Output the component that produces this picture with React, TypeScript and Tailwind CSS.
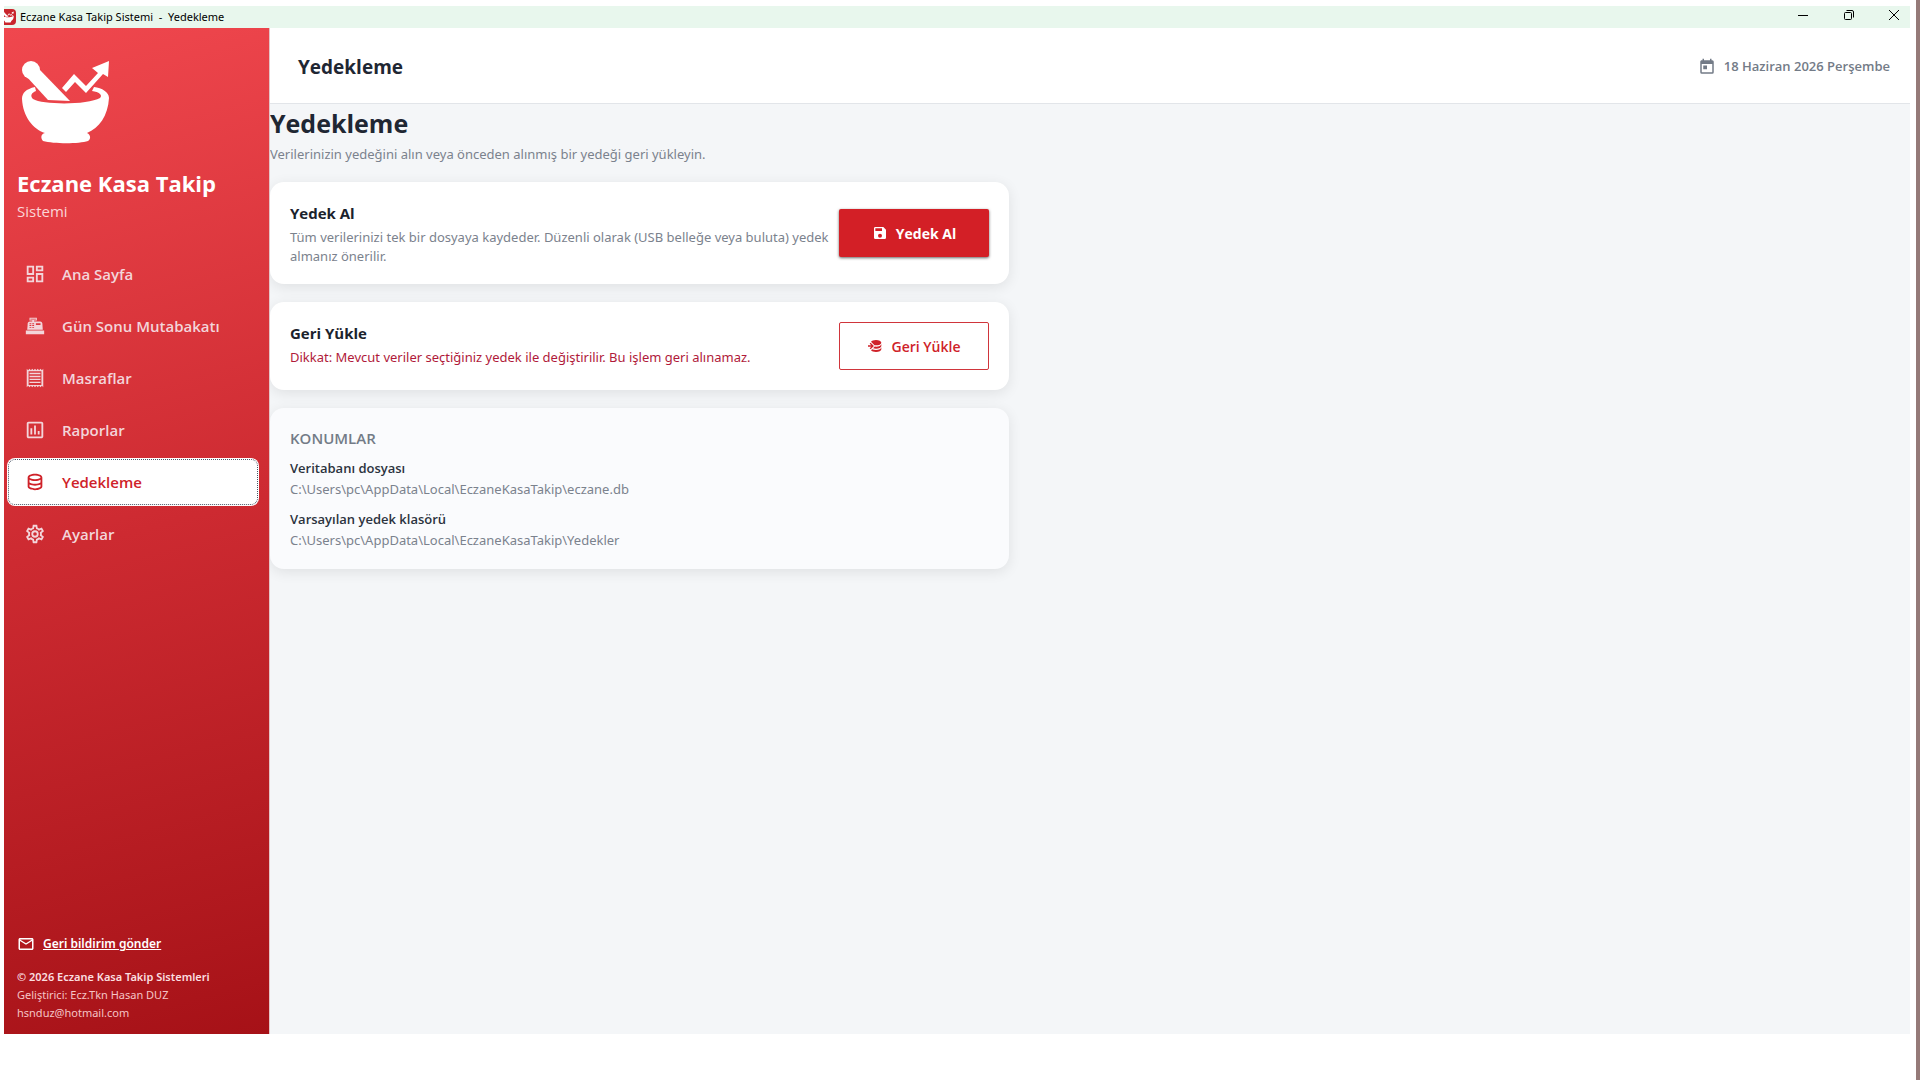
import type { ReactNode } from 'react';

const icons = {
    dashboard: 'M19 5v2h-4V5h4M9 5v6H5V5h4m10 8v6h-4v-6h4M9 17v2H5v-2h4M21 3h-8v6h8V3M11 3H3v10h8V3m10 8h-8v10h8V11m-10 4H3v6h8v-6z',
    register: 'M2,17H22V21H2V17M6.25,7H9V6H6V3H14V6H11V7H17.8C18.8,7 19.8,8 20,9L20.5,16H3.5C3.73,13.58 4,11 4,9C4.2,8 5.25,7 6.25,7M13,9V11H18V9H13M6,9V10H8V9H6M9,9V10H11V9H9M6,11V12H8V11H6M9,11V12H11V11H9M6,13V14H8V13H6M9,13V14H11V13H9M7,4V5H13V4H7Z',
    receipt: 'M19.5 3.5L18 2l-1.500 1.500L15 2l-1.500 1.500L12 2l-1.500 1.500L9 2 7.500 3.500 6 2 4.500 3.500 3 2v20l1.500-1.500L6 22l1.500-1.500L9 22l1.500-1.500L12 22l1.500-1.500L15 22l1.500-1.500L18 22l1.500-1.500L21 22V2l-1.500 1.500zM19 19.500H5V4.500h14v15zM6 16h12v1.500H6zm0-3.200h12v1.500H6zm0-3.200h12v1.500H6zm0-3.200h12v1.500H6z',
    chart: 'M9 17H7V10H9V17M13 17H11V7H13V17M17 17H15V13H17V17M19 19H5V5H19V19.1M19 3H5C3.9 3 3 3.9 3 5V19C3 20.1 3.9 21 5 21H19C20.1 21 21 20.1 21 19V5C21 3.9 20.1 3 19 3Z',
    database: 'M12 3C7.58 3 4 4.79 4 7V17C4 19.21 7.59 21 12 21S20 19.21 20 17V7C20 4.79 16.42 3 12 3M18 17C18 17.5 15.87 19 12 19S6 17.5 6 17V14.77C7.61 15.55 9.72 16 12 16S16.39 15.55 18 14.77V17M18 12.45C16.7 13.4 14.42 14 12 14C9.58 14 7.3 13.4 6 12.45V9.64C7.47 10.47 9.61 11 12 11C14.39 11 16.53 10.47 18 9.64V12.45M12 9C8.13 9 6 7.5 6 7S8.13 5 12 5C15.87 5 18 6.5 18 7S15.87 9 12 9Z',
    cog: 'M12,8A4,4 0 0,1 16,12A4,4 0 0,1 12,16A4,4 0 0,1 8,12A4,4 0 0,1 12,8M12,10A2,2 0 0,0 10,12A2,2 0 0,0 12,14A2,2 0 0,0 14,12A2,2 0 0,0 12,10M10,22C9.75,22 9.54,21.82 9.5,21.58L9.13,18.93C8.5,18.68 7.96,18.34 7.44,17.94L4.95,18.95C4.73,19.03 4.46,18.95 4.34,18.73L2.34,15.27C2.21,15.05 2.27,14.78 2.46,14.63L4.57,12.97L4.5,12L4.57,11L2.46,9.37C2.27,9.22 2.21,8.95 2.34,8.73L4.34,5.27C4.46,5.05 4.73,4.96 4.95,5.05L7.44,6.05C7.96,5.66 8.5,5.32 9.13,5.07L9.5,2.42C9.54,2.18 9.75,2 10,2H14C14.25,2 14.46,2.18 14.5,2.42L14.87,5.07C15.5,5.32 16.04,5.66 16.56,6.05L19.05,5.05C19.27,4.96 19.54,5.05 19.66,5.27L21.66,8.73C21.79,8.95 21.73,9.22 21.54,9.37L19.43,11L19.5,12L19.43,13L21.54,14.63C21.73,14.78 21.79,15.05 21.66,15.27L19.66,18.73C19.54,18.95 19.27,19.04 19.05,18.95L16.56,17.95C16.04,18.34 15.5,18.68 14.87,18.93L14.5,21.58C14.46,21.82 14.25,22 14,22H10M11.25,4L10.88,6.61C9.68,6.86 8.62,7.5 7.85,8.39L5.44,7.35L4.69,8.65L6.8,10.2C6.4,11.37 6.4,12.64 6.8,13.8L4.68,15.36L5.43,16.66L7.86,15.62C8.63,16.5 9.68,17.14 10.87,17.38L11.24,20H12.76L13.13,17.39C14.32,17.14 15.37,16.5 16.14,15.62L18.57,16.66L19.32,15.36L17.2,13.81C17.6,12.64 17.6,11.37 17.2,10.2L19.31,8.65L18.56,7.35L16.15,8.39C15.38,7.5 14.32,6.86 13.12,6.62L12.75,4H11.25Z',
    save: 'M15,9H5V5H15M12,19A3,3 0 0,1 9,16A3,3 0 0,1 12,13A3,3 0 0,1 15,16A3,3 0 0,1 12,19M17,3H5C3.89,3 3,3.9 3,5V19A2,2 0 0,0 5,21H19A2,2 0 0,0 21,19V7L17,3Z',
    restore: 'M12 3C8.59 3 5.69 4.07 4.54 5.57L9.79 10.82C10.5 10.93 11.22 11 12 11C16.42 11 20 9.21 20 7S16.42 3 12 3M3.92 7.08L2.5 8.5L5 11H0V13H5L2.5 15.5L3.92 16.92L8.84 12M20 9C20 11.21 16.42 13 12 13C11.34 13 10.7 12.95 10.09 12.87L7.62 15.34C8.88 15.75 10.38 16 12 16C16.42 16 20 14.21 20 12M20 14C20 16.21 16.42 18 12 18C9.72 18 7.67 17.5 6.21 16.75L4.53 18.43C5.68 19.93 8.59 21 12 21C16.42 21 20 19.21 20 17',
    calendar: 'M7,10H12V15H7M19,19H5V8H19M19,3H18V1H16V3H8V1H6V3H5C3.89,3 3,3.9 3,5V19A2,2 0 0,0 5,21H19A2,2 0 0,0 21,19V5A2,2 0 0,0 19,3Z',
    mail: 'M22 6C22 4.9 21.1 4 20 4H4C2.9 4 2 4.9 2 6V18C2 19.1 2.9 20 4 20H20C21.1 20 22 19.1 22 18V6M20 6L12 11L4 6H20M20 18H4V8L12 13L20 8V18Z',
};

type IconName = keyof typeof icons;

const Icon = ({ name, className }: { name: IconName; className: string }) => (
    <svg viewBox="0 0 24 24" fill="currentColor" fillRule="evenodd" className={`shrink-0 ${className}`} aria-hidden="true">
        <path d={icons[name]} />
    </svg>
);

const Mortar = ({ className }: { className: string }) => (
    <svg viewBox="0 0 90 84" fill="currentColor" className={`shrink-0 ${className}`} aria-hidden="true">
        <circle cx="10" cy="10" r="9" />
        <path d="M5 16L27 40L49 41L19 10Z" />
        <path d="M41 28L53 14L65 26L77 13L71 8L88 1L87 17L82 14L65 33L54 22L45 32Z" />
        <path d="M14 27C5 29 1 33 1 39C2 57 12 69 24 73C19 74 20 79 22 81C33 84 58 84 67 81C70 79 70 75 66 73C78 68 87 56 88 38C88 32 81 28 73 27L71 31C78 32 82 35 79 38C67 45 22 45 12 39C9 36 10 33 15 31Z" />
    </svg>
);

const menu: { icon: IconName; label: string }[] = [
    { icon: 'dashboard', label: 'Ana Sayfa' },
    { icon: 'register', label: 'Gün Sonu Mutabakatı' },
    { icon: 'receipt', label: 'Masraflar' },
    { icon: 'chart', label: 'Raporlar' },
    { icon: 'database', label: 'Yedekleme' },
    { icon: 'cog', label: 'Ayarlar' },
];

const locations = [
    { label: 'Veritabanı dosyası', path: 'C:\\Users\\pc\\AppData\\Local\\EczaneKasaTakip\\eczane.db' },
    { label: 'Varsayılan yedek klasörü', path: 'C:\\Users\\pc\\AppData\\Local\\EczaneKasaTakip\\Yedekler' },
];

const TitleBar = () => (
    <div className="flex h-[22px] items-center bg-[#e8f7ed] text-black">
        <div className="-ml-1 flex size-4 items-center justify-center rounded-sm bg-[#c9252c] text-white">
            <Mortar className="size-3" />
        </div>
        <span className="ml-1 font-['Noto_Sans'] text-[11px] leading-4 whitespace-pre">Eczane Kasa Takip Sistemi  -  Yedekleme</span>
        <div className="ml-auto flex h-full pb-1">
            <button aria-label="Simge durumuna küçült" className="flex w-[46px] items-center justify-center">
                <svg viewBox="0 0 10 10" className="size-[10px]" fill="none" stroke="currentColor"><path d="M0 5.500H10" /></svg>
            </button>
            <button aria-label="Önceki boyut" className="flex w-[46px] items-center justify-center">
                <svg viewBox="0 0 10 10" className="size-[10px]" fill="none" stroke="currentColor">
                    <rect x="0.500" y="2.500" width="7" height="7" rx="1" />
                    <path d="M2.500 0.500H8A1.500 1.500 0 0 1 9.500 2V7.500" />
                </svg>
            </button>
            <button aria-label="Kapat" className="flex w-[38px] items-center justify-center pl-[6px]">
                <svg viewBox="0 0 10 10" className="size-[10px]" fill="none" stroke="currentColor"><path d="M0 0L10 10M10 0L0 10" /></svg>
            </button>
        </div>
    </div>
);

const Sidebar = () => (
    <aside className="flex w-[266px] shrink-0 flex-col border-r border-[#e3c4c6] bg-linear-165 from-[#f0474e] via-[#cd2a31] to-[#a61117]">
        <div className="px-[13px] pt-8">
            <Mortar className="ml-1 h-[84px] w-[90px] text-white" />
            <div className="mt-[23px] text-[22px] leading-8 font-bold text-white">Eczane Kasa Takip</div>
            <div className="text-[15px] leading-6 text-[#fbd5d7]">Sistemi</div>
        </div>
        <nav className="mt-[27px] flex flex-col gap-1 pr-[10px] pl-[3px]">
            {menu.map(({ icon, label }) => (
                <button
                    key={label}
                    className={`flex h-12 items-center gap-4 rounded-lg pl-[17px] text-[15px] font-semibold ${
                        label === 'Yedekleme' ? 'bg-white text-[#cf2229] outline-1 -outline-offset-2 outline-dotted outline-gray-600' : 'text-[#f3d5da]'
                    }`}
                >
                    <Icon name={icon} className="size-[22px]" />
                    {label}
                </button>
            ))}
        </nav>
        <div className="mt-auto px-[13px] pb-3 font-['Noto_Sans']">
            <a href="mailto:hsnduz@hotmail.com" className="flex items-center gap-2 text-[12px] leading-5 font-semibold text-white underline">
                <Icon name="mail" className="size-[18px]" />
                Geri bildirim gönder
            </a>
            <div className="mt-[14px] text-[11px] leading-[18px] text-[#f5c4c6]">
                <p className="font-semibold text-[#fbdfe0]">© 2026 Eczane Kasa Takip Sistemleri</p>
                <p>Geliştirici: Ecz.Tkn Hasan DUZ</p>
                <p>hsnduz@hotmail.com</p>
            </div>
        </div>
    </aside>
);

const Card = ({ className, children }: { className: string; children: ReactNode }) => (
    <section className={`rounded-[14px] px-5 shadow-[0_3px_14px_rgba(0,0,0,0.09)] ${className}`}>{children}</section>
);

const App = () => (
    <div className="flex min-h-screen bg-white font-['Open_Sans','Noto_Sans',sans-serif]">
        <div className="mt-[6px] mb-[46px] ml-1 flex min-w-0 flex-1 flex-col overflow-hidden">
            <TitleBar />
            <div className="flex flex-1">
                <Sidebar />
                <div className="flex min-w-0 flex-1 flex-col bg-[#f4f6f8]">
                    <header className="flex h-[76px] items-center justify-between border-b border-[#e2e5e9] bg-white pt-[3px] pr-5 pl-7">
                        <div className="text-[19px] font-bold text-[#1f2733]">Yedekleme</div>
                        <div className="flex items-center gap-2 text-[13px] font-semibold text-[#737b87]">
                            <Icon name="calendar" className="size-[18px]" />
                            18 Haziran 2026 Perşembe
                        </div>
                    </header>
                    <main className="flex-1 overflow-hidden">
                        <h1 className="mt-[3px] text-[25px] leading-8 font-bold text-[#1f2733]">Yedekleme</h1>
                        <p className="mt-[5px] font-['Noto_Sans'] text-[13px] leading-5 text-[#7b828d]">Verilerinizin yedeğini alın veya önceden alınmış bir yedeği geri yükleyin.</p>
                        <div className="mt-[18px] flex max-w-[739px] flex-col gap-[18px]">
                            <Card className="flex min-h-[102px] items-center bg-white">
                                <div className="min-w-0 flex-1 self-start pt-[19px] pb-[18px]">
                                    <h2 className="text-[15px] leading-6 font-bold text-[#1b222c]">Yedek Al</h2>
                                    <p className="mt-[3px] font-['Noto_Sans'] text-[13px] leading-[19px] text-[#7b828d]">
                                        Tüm verilerinizi tek bir dosyaya kaydeder. Düzenli olarak (USB belleğe veya buluta) yedek almanız önerilir.
                                    </p>
                                </div>
                                <button className="flex h-12 w-[150px] shrink-0 items-center justify-center gap-2 rounded-xs bg-[#d31f26] text-[14px] font-bold text-white shadow-[0_1px_3px_rgba(0,0,0,0.6)]">
                                    <Icon name="save" className="size-4" />
                                    Yedek Al
                                </button>
                            </Card>
                            <Card className="flex min-h-[88px] items-center bg-white">
                                <div className="min-w-0 flex-1 self-start pt-[19px] pb-[18px]">
                                    <h2 className="text-[15px] leading-6 font-bold text-[#1b222c]">Geri Yükle</h2>
                                    <p className="mt-[3px] font-['Noto_Sans'] text-[13px] leading-[19px] text-[#b01a3a]">
                                        Dikkat: Mevcut veriler seçtiğiniz yedek ile değiştirilir. Bu işlem geri alınamaz.
                                    </p>
                                </div>
                                <button className="flex h-12 w-[150px] shrink-0 items-center justify-center gap-2 rounded-xs border border-[#d0353b] text-[14px] font-semibold text-[#cf2229]">
                                    <Icon name="restore" className="size-4" />
                                    Geri Yükle
                                </button>
                            </Card>
                            <Card className="bg-[#fafbfd] pt-[18px] pb-[18px]">
                                <h2 className="text-[15px] leading-6 font-semibold text-[#737b87]">KONUMLAR</h2>
                                <dl className="mt-2 flex flex-col gap-[9px] text-[13px] leading-[21px]">
                                    {locations.map(({ label, path }) => (
                                        <div key={label}>
                                            <dt className="font-semibold text-[#2c333e]">{label}</dt>
                                            <dd className="font-['Noto_Sans'] text-[#7b828d]">{path}</dd>
                                        </div>
                                    ))}
                                </dl>
                            </Card>
                        </div>
                    </main>
                </div>
            </div>
        </div>
        <div className="w-[10px] shrink-0 border-r-4 border-[#957a78]" />
    </div>
);

export default App;
